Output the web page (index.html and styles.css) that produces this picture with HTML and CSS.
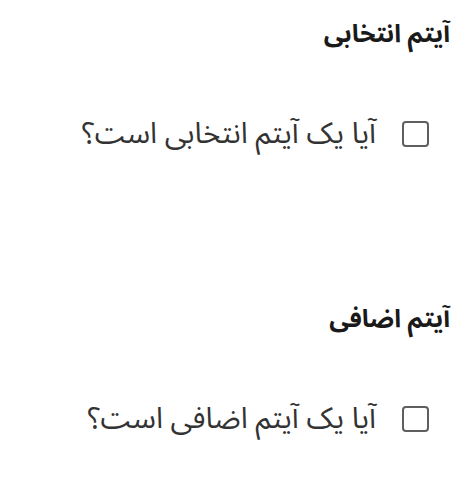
FILE: index.html
```html
<!DOCTYPE html>
<html lang="fa" dir="rtl">
  <head>
    <meta charset="UTF-8" />
    <meta name="viewport" content="width=device-width, initial-scale=1.0" />
    <title>آیتم‌ها</title>
    <link rel="stylesheet" href="styles.css">
  </head>
  <body>
    <div class="form">
      <section class="field">
        <h3 class="field__title">آیتم انتخابی</h3>
        <label class="field__option">
          <input type="checkbox" class="field__check" />
          <span>آیا یک آیتم انتخابی است؟</span>
        </label>
      </section>

      <section class="field">
        <h3 class="field__title">آیتم اضافی</h3>
        <label class="field__option">
          <input type="checkbox" class="field__check" />
          <span>آیا یک آیتم اضافی است؟</span>
        </label>
      </section>
    </div>
  </body>
</html>
```

FILE: styles.css
```css
* {
  box-sizing: border-box;
}

body {
  margin: 0;
  font-family: "Noto Sans Arabic", "DejaVu Sans", sans-serif;
  color: #222;
  background: #fff;
}

.form {
  display: flex;
  flex-direction: column;
  gap: 141px;
  padding: 14px 16px 0 16px;
}

.field__title {
  margin: 0 0 56px;
  font-size: 25px;
  line-height: 40px;
  font-weight: 700;
  color: #1a1a1a;
}

.field__option {
  display: flex;
  align-items: center;
  gap: 26px;
  padding-right: 21px;
  font-size: 29.5px;
  line-height: 48px;
  color: #333;
}

.field__check {
  appearance: none;
  flex: none;
  margin: 0;
  width: 27px;
  height: 26px;
  border: 2.5px solid #5f5f5f;
  border-radius: 4px;
  background: #fff;
}
```
